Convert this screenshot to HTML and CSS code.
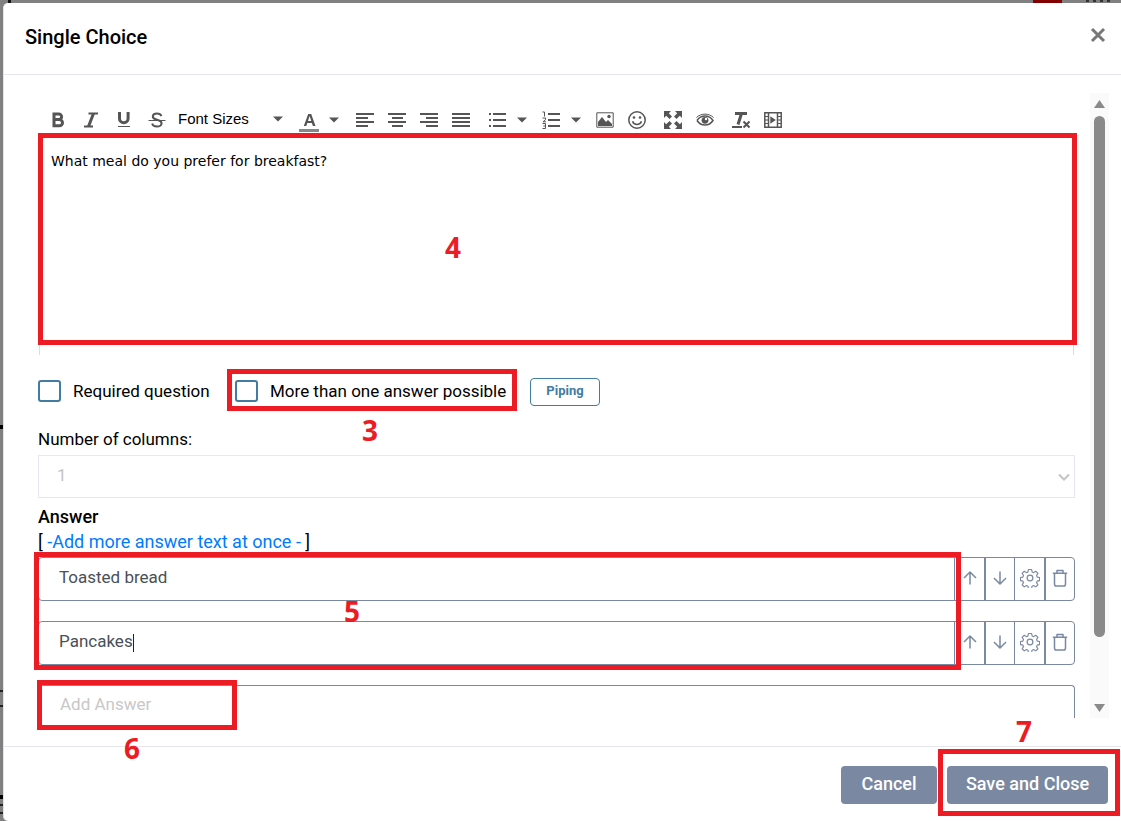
FILE: index.html
```html
<!DOCTYPE html>
<html lang="en">
<head>
<meta charset="utf-8">
<meta name="viewport" content="width=device-width, initial-scale=1">
<title>Single Choice</title>
<link rel="stylesheet" href="styles.css">
</head>
<body>
<svg class="defs" aria-hidden="true">
  <symbol id="up" viewBox="0 0 16 16"><path d="M8 14.500V2M2 8l6-6 6 6"/></symbol>
  <symbol id="down" viewBox="0 0 16 16"><path d="M8 1.500V14M2 8l6 6 6-6"/></symbol>
  <symbol id="gear" viewBox="0 0 24 24"><circle cx="12" cy="12" r="3.400"/><path d="M10 1.500h4l.7 3.200 2 .9 2.800-1.800 2.800 2.800-1.800 2.800.8 2 3.200.6v4l-3.200.7-.8 2 1.800 2.700-2.800 2.800-2.800-1.800-2 .9-.7 3.200h-4l-.7-3.200-2-.9-2.800 1.800-2.800-2.800 1.800-2.700-.8-2-3.200-.7v-4l3.200-.6.8-2-1.800-2.800 2.800-2.800 2.800 1.800 2-.9z" transform="translate(1 .4) scale(.92)"/></symbol>
  <symbol id="trash" viewBox="0 0 16 18"><path d="M.8 4.200h14.400M5 4V1.500h6V4M2.500 4.500v10.700q0 1.800 1.800 1.800h7.400q1.800 0 1.800-1.800V4.500"/></symbol>
  <symbol id="caret" viewBox="0 0 10 6"><path d="M0 .5h10L5 5.500z"/></symbol>
</svg>
<div class="modal" role="dialog" aria-labelledby="title">
  <header class="modal-header">
    <h1 id="title">Single Choice</h1>
    <button class="close" type="button" aria-label="Close"><svg width="16" height="16" viewBox="0 0 16 16"><path d="M2 2l12 12M14 2L2 14"/></svg></button>
  </header>
  <div class="modal-body">
    <main class="content">
      <div class="toolbar" role="toolbar" aria-label="Formatting">
        <div class="group wide">
          <button type="button" aria-label="Bold"><svg width="18" height="18" viewBox="0 0 18 18"><path class="line3" d="M5 3h4.800a2.800 2.800 0 0 1 0 5.600H5zM5 8.600h5.400a3.100 3.100 0 0 1 0 6.200H5z"/></svg></button>
          <button type="button" aria-label="Italic"><svg width="18" height="18" viewBox="0 0 18 18"><path class="line2" d="M6.500 2.500H16M2 15.500h9"/><path class="line3" d="M11.500 2.500l-5 13"/></svg></button>
          <button type="button" aria-label="Underline"><svg width="18" height="18" viewBox="0 0 18 18"><path class="line3" d="M4.500 1v6.500a4.200 4.200 0 0 0 8.600 0V1"/><path class="line1" d="M3 15.500h12"/></svg></button>
          <button type="button" aria-label="Strikethrough"><svg width="18" height="18" viewBox="0 0 18 18"><path class="line2" d="M13.500 5c-.8-1.800-2.400-2.500-4.500-2.500-5 0-5.500 4.500-1.500 5.700l3 1c4.500 1.300 4 6.300-1.500 6.300-2.500 0-4.300-.8-4.800-3"/><path class="line1" d="M.5 9.500h17"/></svg></button>
        </div>
        <div class="group sizes">
          <select aria-label="Font Sizes"><option>Font Sizes</option></select>
          <svg class="caret" width="10" height="6"><use href="#caret"/></svg>
        </div>
        <div class="group">
          <button class="color" type="button" aria-label="Text color"><svg width="20" height="22" viewBox="0 0 20 22"><path d="M4.800 15L9.200 3h3l4.300 12h-2.600l-1-3H8.300l-1 3zM9 10h3.300l-1.700-5z"/><path class="swatch" d="M0 18h20v3H0z"/></svg></button>
          <button class="drop big" type="button" aria-label="Text color menu"><svg width="10" height="6"><use href="#caret"/></svg></button>
        </div>
        <div class="group">
          <button type="button" aria-label="Align left"><svg width="18" height="18" viewBox="0 0 18 18"><path class="line2" d="M0 3h18M0 7h12M0 11h18M0 15h12"/></svg></button>
          <button type="button" aria-label="Align center"><svg width="18" height="18" viewBox="0 0 18 18"><path class="line2" d="M0 3h18M4 7h11M0 11h18M4 15h11"/></svg></button>
          <button type="button" aria-label="Align right"><svg width="18" height="18" viewBox="0 0 18 18"><path class="line2" d="M0 3h18M6 7h12M0 11h18M6 15h12"/></svg></button>
          <button type="button" aria-label="Justify"><svg width="18" height="18" viewBox="0 0 18 18"><path class="line2" d="M0 3h18M0 7h18M0 11h18M0 15h18"/></svg></button>
        </div>
        <div class="group">
          <button type="button" aria-label="Bullet list"><svg width="18" height="18" viewBox="0 0 18 18"><path class="line2" d="M5 3h13M5 9h13M5 15h13M1 3h2M1 9h2M1 15h2"/></svg></button>
          <button class="drop" type="button" aria-label="Bullet list menu"><svg width="10" height="6"><use href="#caret"/></svg></button>
        </div>
        <div class="group">
          <button type="button" aria-label="Numbered list"><svg width="18" height="18" viewBox="0 0 18 18"><path class="line2" d="M6 3h12M6 9h12M6 15h12"/><path class="line1" d="M.5 1H2.500V5.500M.5 7h3v1.700L1 10.800h3M.5 12.500h3v5h-3M1.300 15h2"/></svg></button>
          <button class="drop" type="button" aria-label="Numbered list menu"><svg width="10" height="6"><use href="#caret"/></svg></button>
        </div>
        <div class="group">
          <button type="button" aria-label="Insert image"><svg width="18" height="16" viewBox="0 0 18 16"><path class="line1" d="M.8.8h16.400v14.400H.8z"/><path d="M2 14v-4l4-5 4 5 2-2 4 4v2z"/><circle cx="13" cy="4.500" r="1.700"/></svg></button>
          <button type="button" aria-label="Emoticons"><svg width="18" height="18" viewBox="0 0 18 18"><circle class="line15" cx="9" cy="9" r="8.200"/><circle cx="6" cy="6.500" r="1.300"/><circle cx="12" cy="6.500" r="1.300"/><path class="line15" d="M4.500 10.200c1.500 4.300 7.500 4.300 9 0"/></svg></button>
        </div>
        <div class="group">
          <button type="button" aria-label="Fullscreen"><svg width="18" height="18" viewBox="0 0 18 18"><path d="M0 0h7L4.800 2.200 8 5.500 5.500 8 2.200 4.800 0 7zM18 0h-7l2.200 2.200L10 5.500 12.500 8l3.300-3.200L18 7zM0 18h7l-2.200-2.200L8 12.500 5.500 10l-3.300 3.200L0 11zM18 18h-7l2.200-2.200-3.200-3.300 2.500-2.500 3.300 3.200L18 11z"/></svg></button>
          <button type="button" aria-label="Preview"><svg width="18" height="14" viewBox="0 0 18 14"><path class="line15" d="M1 7.500c4-6 12-6 16 0-4 6-12 6-16 0"/><path class="line1" d="M.5 4.500C5 0 13 0 17.500 4.500"/><circle cx="9" cy="7.300" r="3.400"/><circle class="glint" cx="10" cy="6" r="1.200"/></svg></button>
        </div>
        <div class="group">
          <button type="button" aria-label="Clear formatting"><svg width="20" height="18" viewBox="0 0 20 18"><path class="line3" d="M4 2.500h12M10.500 2.500l-3.500 11"/><path class="line2" d="M1 16h10M12.500 10.500l6 6M18.500 10.500l-6 6"/></svg></button>
          <button type="button" aria-label="Insert media"><svg width="18" height="16" viewBox="0 0 18 16"><path class="line15" d="M.8.8h16.400v14.400H.8zM4.500 1v14M13.500 1v14"/><path class="line1" d="M1 4.500h3.500M1 8h3.500M1 11.500h3.500M13.500 4.500H17M13.500 8H17M13.500 11.500H17"/><path d="M6.300 4.200l5.500 3.800-5.500 3.800z"/></svg></button>
        </div>
      </div>

      <div class="editor">
        <textarea aria-label="Question text">What meal do you prefer for breakfast?</textarea>
        <span class="mark mark-editor"></span><span class="num num-4">4</span>
      </div>

      <div class="options">
        <label class="check"><input type="checkbox">Required question</label>
        <label class="check multi"><input type="checkbox">More than one answer possible<span class="mark mark-multi"></span><span class="num num-3" aria-hidden="true">3</span></label>
        <button class="piping" type="button">Piping</button>
      </div>

      <label class="field-label" for="columns">Number of columns:</label>
      <div class="select">
        <select id="columns" disabled><option>1</option></select>
        <svg width="12" height="8" viewBox="0 0 12 8"><path d="M1 1.500l5 5 5-5"/></svg>
      </div>

      <h2>Answer</h2>
      <p class="bulk">[ <a href="#">-Add more answer text at once -</a> ]</p>

      <div class="answers">
        <div class="answer">
          <input type="text" aria-label="Answer 1" value="Toasted bread">
          <button type="button" aria-label="Move up"><svg width="16" height="16"><use href="#up"/></svg></button>
          <button type="button" aria-label="Move down"><svg width="16" height="16"><use href="#down"/></svg></button>
          <button type="button" aria-label="Settings"><svg width="20" height="20"><use href="#gear"/></svg></button>
          <button type="button" aria-label="Delete"><svg width="16" height="18"><use href="#trash"/></svg></button>
        </div>
        <div class="answer">
          <input type="text" aria-label="Answer 2" value="Pancakes">
          <span class="text-cursor"></span>
          <button type="button" aria-label="Move up"><svg width="16" height="16"><use href="#up"/></svg></button>
          <button type="button" aria-label="Move down"><svg width="16" height="16"><use href="#down"/></svg></button>
          <button type="button" aria-label="Settings"><svg width="20" height="20"><use href="#gear"/></svg></button>
          <button type="button" aria-label="Delete"><svg width="16" height="18"><use href="#trash"/></svg></button>
        </div>
        <span class="mark mark-answers"></span><span class="num num-5">5</span>
      </div>
      <div class="add">
        <input type="text" aria-label="Add Answer" placeholder="Add Answer">
        <span class="mark mark-add"></span><span class="num num-6">6</span>
      </div>
    </main>
    <div class="scrollbar" aria-hidden="true">
      <svg width="13" height="10" viewBox="0 0 13 10"><path d="M6.500 1L12 9H1z"/></svg>
      <div class="thumb"></div>
      <svg width="13" height="10" viewBox="0 0 13 10"><path d="M6.500 9L12 1H1z"/></svg>
    </div>
  </div>
  <footer class="modal-footer">
    <button class="btn" type="button">Cancel</button>
    <div class="save"><button class="btn btn-save" type="button">Save and Close</button><span class="mark mark-save"></span><span class="num num-7">7</span></div>
  </footer>
</div>
</body>
</html>
```
FILE: styles.css
```css
* { box-sizing: border-box; }
body {
  margin: 0;
  min-height: 100vh;
  padding: 3px 0 0 3px;
  display: flex;
  font: 17px/24px Roboto, "Liberation Sans", sans-serif;
  color: #000;
  background:
    linear-gradient(#820000, #820000) right 59px top / 29px 3px no-repeat,
    repeating-linear-gradient(90deg, #333 0 3px, #808080 3px 7px) right 11px top / 24px 2px no-repeat,
    linear-gradient(#111, #111) 8px 0 / 3px 3px no-repeat,
    linear-gradient(#000, #000) 0 425px / 3px 4px no-repeat,
    linear-gradient(#222, #222) 0 690px / 3px 2px no-repeat,
    linear-gradient(#222, #222) 0 705px / 3px 2px no-repeat,
    linear-gradient(#000, #000) 0 795px / 3px 4px no-repeat,
    linear-gradient(#222, #222) 0 804px / 3px 2px no-repeat,
    linear-gradient(#222, #222) 0 812px / 3px 2px no-repeat,
    #808080;
}
button, input, select, textarea { font: inherit; color: inherit; margin: 0; }
button { border: 0; background: none; padding: 0; display: flex; align-items: center; justify-content: center; }
select, input { appearance: none; border-radius: 0; }
.defs { position: absolute; width: 0; height: 0; }
.modal {
  flex: 1;
  min-width: 0;
  display: flex;
  flex-direction: column;
  background: #fff;
  border-left: 1px solid #e4e4e4;
  border-radius: 5px 0 0 5px;
}
.modal-header {
  display: flex;
  justify-content: space-between;
  align-items: flex-start;
  height: 72px;
  padding: 22px 15px 0 21px;
  border-bottom: 1px solid #e6e7f0;
}
h1 { margin: 0; font-size: 20px; line-height: 24px; font-weight: 500; }
.close { padding: 2px 0; }
.close path { stroke: #777; stroke-width: 3; }
.modal-body { flex: 1; display: flex; gap: 15px; padding: 18px 12px 28px 34px; }
.content { flex: 1; min-width: 0; padding-top: 12px; display: flex; flex-direction: column; }

.toolbar { display: flex; gap: 4px; height: 28px; padding-left: 3px; font: 15px/24px "Liberation Sans", sans-serif; }
.group { display: flex; align-items: center; }
.group button { width: 32px; height: 28px; padding-top: 2px; }
.group.wide button { width: 33px; }
.group .color { width: 28px; align-items: flex-end; }
.group .drop { width: 18px; }
.group .big { width: 22px; }
.toolbar svg { fill: #555; }
.toolbar .swatch { fill: #888; }
.toolbar .line1, .toolbar .line15, .toolbar .line2, .toolbar .line3 { fill: none; stroke: #555; }
.line1 { stroke-width: 1; }
.line15 { stroke-width: 1.5; }
.line2 { stroke-width: 2; }
.line3 { stroke-width: 3; }
.toolbar .glint { fill: #fff; }
.sizes { width: 114px; position: relative; }
.sizes select { border: 0; background: none; width: 100%; padding: 0 1px; }
.sizes .caret { position: absolute; right: 8px; }

.editor { position: relative; height: 222px; margin: 0 1px; border: solid #ddd; border-width: 0 1px; }
.editor textarea {
  display: block; width: 100%; height: 210px; padding: 18px 11px; border: 0; resize: none; outline: 0; background: none;
  font: 14px/20px "DejaVu Sans", sans-serif;
}

.options { display: flex; align-items: center; gap: 19px; height: 28px; margin-top: 23px; }
.check { display: flex; align-items: center; gap: 12px; min-width: 178px; height: 26px; align-self: flex-start; white-space: nowrap; position: relative; }
.multi { min-width: 276px; }
.check input { width: 23px; height: 22px; border: 2px solid #437ba1; border-radius: 3px; background: #fff; }
.piping { width: 70px; height: 28px; padding-bottom: 2px; border: 1px solid #437ba1; border-radius: 4px; color: #437ba1; font-size: 13px; font-weight: 700; }

.field-label { margin-top: 21px; }
.select { position: relative; margin-top: 4px; }
.select select { display: block; width: 100%; height: 43px; border: 1px solid #e6e7f0; background: #fff; padding: 0 18px 3px; color: #c4c4c4; opacity: 1; }
.select svg { position: absolute; right: 5px; top: 18px; fill: none; stroke: #c4c4c4; stroke-width: 2; }
h2 { margin: 7px 0 0; font-size: 18px; line-height: 24px; font-weight: 500; }
.bulk { margin: 1px 0 0; font-size: 18px; }
.bulk a { color: #007bff; text-decoration: none; }

.answers { position: relative; display: flex; flex-direction: column; gap: 20px; margin-top: 3px; }
.answer { position: relative; display: flex; height: 44px; border: 1px solid #7b88a1; border-radius: 4px; }
.answer input { flex: 1; min-width: 0; border: 0; outline: 0; background: none; padding: 0 20px 5px; color: #495057; }
.answer button { width: 30px; padding-bottom: 2px; border-left: 1px solid #7b88a1; }
.answer button + button { border-left-width: 2px; }
.answer button:nth-last-child(2) { border-left-width: 1px; }
.answer svg { fill: none; stroke: #7b88a1; stroke-width: 1.5; stroke-linejoin: round; }
.text-cursor { position: absolute; left: 94px; top: 12px; width: 1px; height: 18px; background: #222; }
.add { position: relative; height: 33px; margin-top: 20px; }
.add input { display: block; width: 100%; height: 33px; padding: 3px 21px 0; border: solid #7b88a1; border-width: 1px 1px 0; border-radius: 4px 4px 0 0; background: none; }
.add input::placeholder { color: #c8c8c8; opacity: 1; }

.scrollbar { width: 19px; display: flex; flex-direction: column; align-items: center; padding: 6px 0 5px; background: #fafafa; fill: #8a8a8a; }
.thumb { width: 11px; height: 521px; margin: 7px 0 auto; border-radius: 6px; background: #8a8a8a; }

.modal-footer { display: flex; justify-content: flex-end; align-items: flex-start; gap: 10px; height: 75px; padding: 19px 13px 0; border-top: 1px solid #e6e7f0; }
.btn { min-width: 96px; height: 38px; padding: 0 16px 2px; border-radius: 4px; background: #7b88a1; color: #fff; font-size: 18px; font-weight: 500; white-space: nowrap; }
.btn-save { min-width: 161px; }
.save { position: relative; }

.mark { position: absolute; border: 5px solid #ed1c24; pointer-events: none; z-index: 1; }
.num { position: absolute; z-index: 1; color: #ed1c24; font: 700 28px/28px "Open Sans", sans-serif; }
.mark-editor { inset: 0 -4px 10px -2px; }
.mark-multi { inset: -9px -6px -7px -8px; }
.mark-answers { inset: -5px 114px -5px -4px; }
.mark-add { left: -1px; top: -5px; width: 200px; height: 50px; }
.mark-save { inset: -17px -12px -12px -9px; }
.num-4 { left: 405px; top: 100px; }
.num-3 { left: 127px; top: 38px; }
.num-5 { left: 306px; top: 40px; }
.num-6 { left: 86px; top: 49px; }
.num-7 { left: 69px; top: -49px; }
```
